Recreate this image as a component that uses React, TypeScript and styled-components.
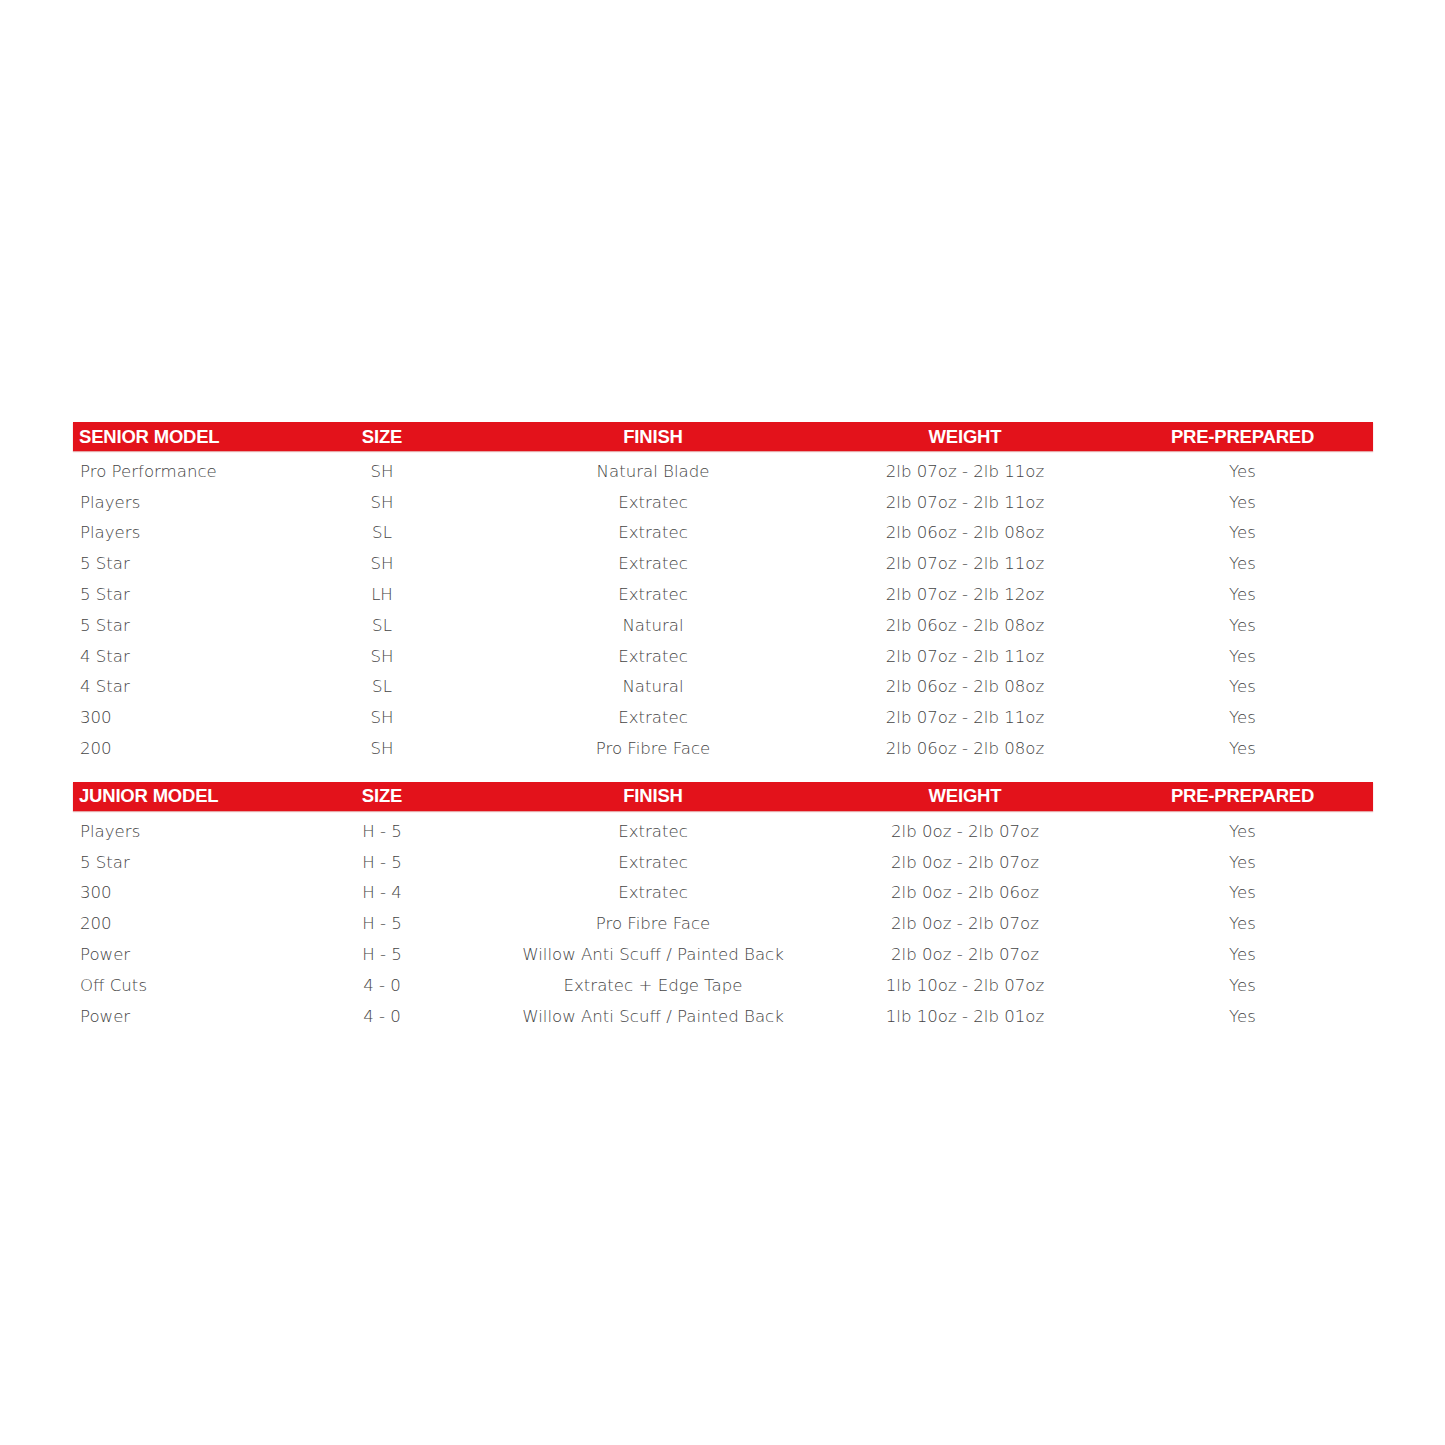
import styled, { createGlobalStyle } from "styled-components";

interface BatRow {
  model: string;
  size: string;
  finish: string;
  weight: string;
  prepared: string;
}

const senior: BatRow[] = [
  { model: "Pro Performance", size: "SH", finish: "Natural Blade", weight: "2lb 07oz - 2lb 11oz", prepared: "Yes" },
  { model: "Players", size: "SH", finish: "Extratec", weight: "2lb 07oz - 2lb 11oz", prepared: "Yes" },
  { model: "Players", size: "SL", finish: "Extratec", weight: "2lb 06oz - 2lb 08oz", prepared: "Yes" },
  { model: "5 Star", size: "SH", finish: "Extratec", weight: "2lb 07oz - 2lb 11oz", prepared: "Yes" },
  { model: "5 Star", size: "LH", finish: "Extratec", weight: "2lb 07oz - 2lb 12oz", prepared: "Yes" },
  { model: "5 Star", size: "SL", finish: "Natural", weight: "2lb 06oz - 2lb 08oz", prepared: "Yes" },
  { model: "4 Star", size: "SH", finish: "Extratec", weight: "2lb 07oz - 2lb 11oz", prepared: "Yes" },
  { model: "4 Star", size: "SL", finish: "Natural", weight: "2lb 06oz - 2lb 08oz", prepared: "Yes" },
  { model: "300", size: "SH", finish: "Extratec", weight: "2lb 07oz - 2lb 11oz", prepared: "Yes" },
  { model: "200", size: "SH", finish: "Pro Fibre Face", weight: "2lb 06oz - 2lb 08oz", prepared: "Yes" },
];

const junior: BatRow[] = [
  { model: "Players", size: "H - 5", finish: "Extratec", weight: "2lb 0oz - 2lb 07oz", prepared: "Yes" },
  { model: "5 Star", size: "H - 5", finish: "Extratec", weight: "2lb 0oz - 2lb 07oz", prepared: "Yes" },
  { model: "300", size: "H - 4", finish: "Extratec", weight: "2lb 0oz - 2lb 06oz", prepared: "Yes" },
  { model: "200", size: "H - 5", finish: "Pro Fibre Face", weight: "2lb 0oz - 2lb 07oz", prepared: "Yes" },
  { model: "Power", size: "H - 5", finish: "Willow Anti Scuff / Painted Back", weight: "2lb 0oz - 2lb 07oz", prepared: "Yes" },
  { model: "Off Cuts", size: "4 - 0", finish: "Extratec + Edge Tape", weight: "1lb 10oz - 2lb 07oz", prepared: "Yes" },
  { model: "Power", size: "4 - 0", finish: "Willow Anti Scuff / Painted Back", weight: "1lb 10oz - 2lb 01oz", prepared: "Yes" },
];

function SpecTable({ title, rows }: { title: string; rows: BatRow[] }) {
  return (
    <S.Table>
      <S.HeadRow>
        <S.HeadCell $align="left">{title}</S.HeadCell>
        <S.HeadCell>SIZE</S.HeadCell>
        <S.HeadCell>FINISH</S.HeadCell>
        <S.HeadCell>WEIGHT</S.HeadCell>
        <S.HeadCell $last>PRE-PREPARED</S.HeadCell>
      </S.HeadRow>
      <S.Body>
        {rows.map((r, i) => (
          <S.Row key={i}>
            <S.Cell $align="left">{r.model}</S.Cell>
            <S.Cell>{r.size}</S.Cell>
            <S.Cell>{r.finish}</S.Cell>
            <S.Cell>{r.weight}</S.Cell>
            <S.Cell $last>{r.prepared}</S.Cell>
          </S.Row>
        ))}
      </S.Body>
    </S.Table>
  );
}

export default function App() {
  return (
    <>
      <GlobalStyle />
      <S.Page>
        <SpecTable title="SENIOR MODEL" rows={senior} />
        <SpecTable title="JUNIOR MODEL" rows={junior} />
      </S.Page>
    </>
  );
}

const GlobalStyle = createGlobalStyle`
  body {
    margin: 0;
    background: #fff;
  }
`;

const columns = "247px 124px 418px 206px 305px";

const S = {
  Page: styled.div`
    width: 1445px;
    height: 1445px;
    padding: 422px 0 0 73px;
    box-sizing: border-box;
    display: flex;
    flex-direction: column;
    gap: 18px;
  `,

  Table: styled.div`
    width: 1300px;
    display: flex;
    flex-direction: column;
  `,

  HeadRow: styled.div`
    display: grid;
    grid-template-columns: ${columns};
    height: 29px;
    align-items: center;
    background: #e3121b;
    box-shadow: 0 1px 1px rgba(180, 0, 0, 0.35);
  `,

  HeadCell: styled.div<{ $align?: "left" | "center"; $last?: boolean }>`
    font-family: "Liberation Sans", Arial, sans-serif;
    font-weight: 700;
    font-size: 18.5px;
    letter-spacing: -0.2px;
    color: #fff;
    text-align: ${(p) => p.$align ?? "center"};
    padding-left: ${(p) => (p.$align === "left" ? "6px" : p.$last ? "44px" : "0")};
    white-space: nowrap;
  `,

  Body: styled.div`
    display: flex;
    flex-direction: column;
    padding-top: 5px;
  `,

  Row: styled.div`
    display: grid;
    grid-template-columns: ${columns};
    height: 30.8px;
    align-items: center;
  `,

  Cell: styled.div<{ $align?: "left" | "center"; $last?: boolean }>`
    font-family: "DejaVu Sans", sans-serif;
    font-weight: 200;
    font-size: 16.6px;
    color: #444;
    text-align: ${(p) => p.$align ?? "center"};
    padding-left: ${(p) => (p.$align === "left" ? "7px" : p.$last ? "44px" : "0")};
    white-space: nowrap;
  `,
};
